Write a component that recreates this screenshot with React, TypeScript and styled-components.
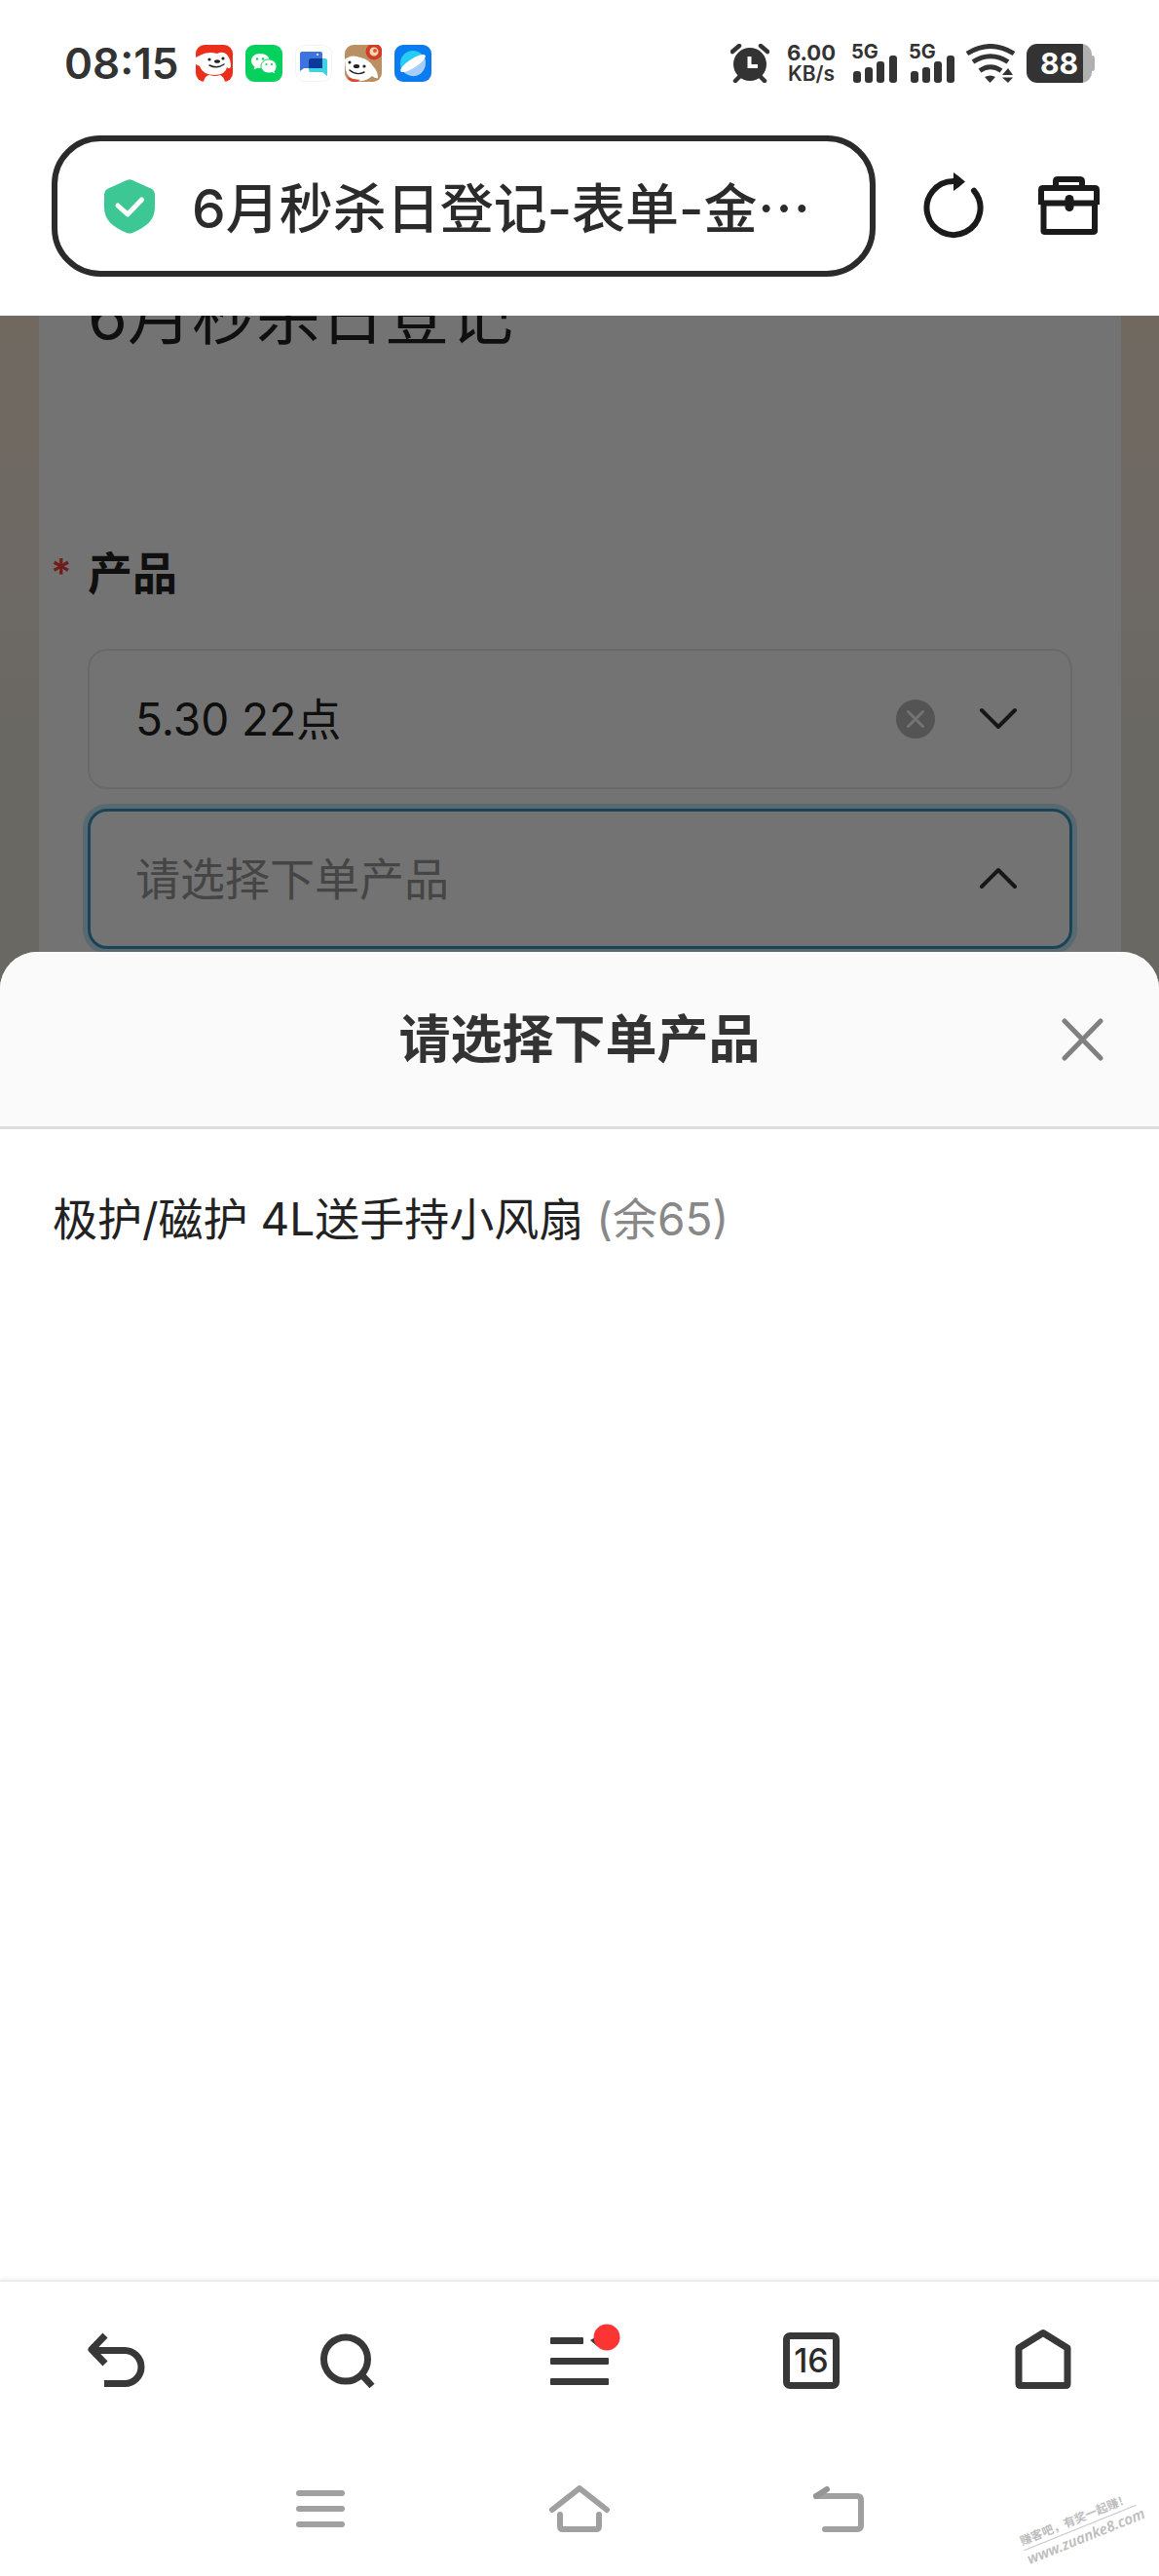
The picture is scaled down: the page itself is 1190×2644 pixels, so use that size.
import React from "react";
import styled, { createGlobalStyle, css } from "styled-components";

const GlobalStyle = createGlobalStyle`
  *, *::before, *::after { box-sizing: border-box; }
  body {
    margin: 0;
    background: #ffffff;
    color: #333333;
    font-family: Inter, "Noto Sans CJK SC", sans-serif;
  }
  button, select {
    font: inherit;
    color: inherit;
    background: none;
    border: 0;
    margin: 0;
    padding: 0;
  }
  svg { display: block; flex: none; }
`;

const Screen = styled.div`
  position: relative;
  display: flex;
  flex-direction: column;
  min-height: 100vh;
`;

/* ---------- status bar ---------- */

const StatusBar = styled.header`
  display: flex;
  align-items: center;
  justify-content: space-between;
  height: 129px;
  padding: 0 66px;
`;

const StatusGroup = styled.div<{ $gap: number }>`
  display: flex;
  align-items: center;
  gap: ${(p) => p.$gap}px;
`;

const Clock = styled.time`
  margin-right: 4px;
  font-size: 44px;
  font-weight: 600;
  line-height: 48px;
`;

const Speed = styled.div`
  display: flex;
  flex-direction: column;
  align-items: center;
  margin: 0 4px 0 6px;
  font-size: 22px;
  font-weight: 700;
  line-height: 22px;
`;

const SpeedUnit = styled.span`
  font-size: 21px;
  font-weight: 600;
`;

const Signal = styled.div`
  display: grid;
  width: 47px;
  height: 40px;
`;

const SignalLabel = styled.span`
  grid-area: 1 / 1;
  font-size: 20px;
  font-weight: 700;
  line-height: 16px;
`;

const SignalBars = styled.svg`
  grid-area: 1 / 1;
  align-self: end;
`;

const Battery = styled.div`
  display: flex;
  align-items: center;
`;

const BatteryBody = styled.div`
  display: flex;
  align-items: center;
  justify-content: center;
  width: 67px;
  height: 40px;
  border-radius: 11px;
  background: linear-gradient(90deg, #333333 58px, #b0b0b0 58px);
  color: #ffffff;
  font-size: 30px;
  font-weight: 700;
  line-height: 40px;
`;

const BatteryTip = styled.div`
  width: 3px;
  height: 16px;
  border-radius: 0 3px 3px 0;
  background: #b0b0b0;
`;

/* ---------- browser toolbar ---------- */

const Toolbar = styled.div`
  display: flex;
  align-items: center;
  padding: 10px 60px 40px 53px;
`;

const AddressBar = styled.button`
  display: flex;
  flex: 1;
  align-items: center;
  gap: 38px;
  min-width: 0;
  height: 145px;
  padding: 0 48px;
  border: 6px solid #2b2b2b;
  border-radius: 50px;
  color: #2b2b2b;
  font-size: 55px;
  font-weight: 500;
  line-height: 74px;
  white-space: nowrap;
`;

const Ellipsis = styled.span`
  font-family: "Noto Sans CJK SC", sans-serif;
`;

const ToolbarActions = styled.div`
  display: flex;
  gap: 56px;
  margin-left: 47px;
`;

/* ---------- page behind the sheet ---------- */

const Stage = styled.main`
  display: grid;
  flex: 1;
  grid-template-columns: minmax(0, 1fr);
  grid-template-rows: 653px 1fr;
`;

const FormPage = styled.div`
  grid-area: 1 / 1 / 3 / 2;
  padding: 0 39px 0 40px;
  background: linear-gradient(180deg, #fae8d6 0, #f3e9de 260px, #ece7dc 420px, #e8e6dc 653px);
`;

const FormCard = styled.form`
  height: 100%;
  padding: 0 50px;
  background: #ffffff;
`;

/* The page is scrolled, so only the lower part of the title stays in view. */
const TitleClip = styled.div`
  display: flex;
  align-items: flex-end;
  height: 46px;
  overflow: hidden;
`;

const FormTitle = styled.h1`
  margin: 0;
  color: #222222;
  font-size: 66px;
  font-weight: 400;
  line-height: 92px;
`;

const FieldLabel = styled.label`
  display: flex;
  align-items: center;
  margin: 187px 0 47px -38px;
  color: #222222;
  font-size: 46px;
  font-weight: 700;
  line-height: 62px;
`;

const Required = styled.span`
  width: 38px;
  color: #f5413a;
  font-size: 40px;
  font-weight: 600;
`;

const SelectStack = styled.div`
  display: flex;
  flex-direction: column;
  gap: 20px;
`;

const SelectBox = styled.div<{ $open?: boolean }>`
  display: flex;
  align-items: center;
  height: 144px;
  padding: 0 54px 0 47px;
  border: 2px solid #e8e8e8;
  border-radius: 20px;
  ${(p) =>
    p.$open &&
    css`
      padding: 0 53px 0 46px;
      border: 3px solid #3a96c0;
      box-shadow: 0 0 0 5px #c4e8f7;
    `}
`;

const Select = styled.select<{ $empty?: boolean }>`
  flex: 1;
  min-width: 0;
  height: 72px;
  appearance: none;
  outline: none;
  color: ${(p) => (p.$empty ? "#999999" : "#222222")};
  font-size: 46px;
  line-height: 64px;
`;

const ClearButton = styled.button`
  margin-right: 45px;
`;

const Backdrop = styled.div`
  z-index: 1;
  grid-area: 1 / 1 / 3 / 2;
  background: rgba(0, 0, 0, 0.55);
`;

/* ---------- bottom sheet ---------- */

const Sheet = styled.section`
  z-index: 2;
  grid-area: 2 / 1;
  border-radius: 38px 38px 0 0;
  background: #ffffff;
  overflow: hidden;
`;

const SheetHeader = styled.div`
  display: grid;
  grid-template-columns: 1fr auto 1fr;
  align-items: center;
  height: 182px;
  padding: 0 56px;
  border-bottom: 3px solid #dddddd;
  background: #fafafa;
`;

const SheetTitle = styled.h2`
  grid-column: 2;
  margin: 0;
  font-size: 53px;
  font-weight: 700;
  line-height: 72px;
`;

const CloseButton = styled.button`
  justify-self: end;
`;

const OptionList = styled.ul`
  margin: 0;
  padding: 50px 54px;
  list-style: none;
`;

const Option = styled.button`
  display: block;
  width: 100%;
  color: #222222;
  font-size: 46px;
  line-height: 84px;
  text-align: left;
`;

const Stock = styled.span`
  color: #888888;
`;

/* ---------- bottom bars ---------- */

const TabBar = styled.nav`
  z-index: 3;
  display: grid;
  grid-template-columns: repeat(5, 1fr);
  height: 168px;
  padding-bottom: 4px;
  border-top: 2px solid #ebebeb;
  background: #ffffff;
  box-shadow: 0 -3px 4px rgba(0, 0, 0, 0.03);
`;

const TabButton = styled.button`
  display: flex;
  align-items: center;
  justify-content: center;
`;

const TabCount = styled.span`
  display: flex;
  align-items: center;
  justify-content: center;
  width: 58px;
  height: 58px;
  border: 7px solid #383838;
  border-radius: 7px;
  color: #2b2b2b;
  font-size: 34px;
  font-weight: 500;
  line-height: 40px;
`;

const SystemNav = styled.nav`
  display: grid;
  grid-template-columns: repeat(3, 1fr);
  width: 67%;
  height: 136px;
  margin: 0 auto;
`;

const Watermark = styled.a`
  position: absolute;
  right: 19px;
  bottom: 31px;
  display: flex;
  flex-direction: column;
  width: 124px;
  color: #bdbdbd;
  font-size: 12px;
  font-weight: 700;
  line-height: 18px;
  text-decoration: none;
  white-space: nowrap;
  transform: rotate(-22deg);
`;

const WatermarkUrl = styled.span`
  border-top: 1px solid #c8c8c8;
  font-family: "Noto Sans", sans-serif;
  font-size: 15px;
  font-style: italic;
  font-weight: 600;
`;

/* ---------- drawings ---------- */

const MallDogIcon = () => (
  <svg width="38" height="38" viewBox="0 0 38 38" aria-hidden="true">
    <rect width="38" height="38" rx="9" fill="#ec2f1a" />
    <path d="M0 13 4 11Q12 6 22 9Q28 6 32 10Q36 15 36 22Q35 26 32 23Q31 30 20 31Q7 31 4 22L0 20Z" fill="#fff" />
    <path d="M8 38Q9 32 14 31Q20 33 25 31Q29 33 30 38Z" fill="#fff" />
    <circle cx="14" cy="15" r="1.6" fill="#222" />
    <circle cx="28" cy="14" r="1.6" fill="#222" />
    <ellipse cx="22" cy="17" rx="3" ry="1.8" fill="#222" />
    <path d="M14 21Q22 25 29 20" fill="none" stroke="#222" strokeWidth="1.4" strokeLinecap="round" />
  </svg>
);

const ChatBubblesIcon = () => (
  <svg width="38" height="38" viewBox="0 0 38 38" aria-hidden="true">
    <rect width="38" height="38" rx="9" fill="#06d15c" />
    <path d="M15 9C9.500 9 6 12.500 6 16.500C6 19 7.500 21 9.500 22.500L8.500 25.500L12.300 23.700Q14 24 16 24C21 24 25 21 25 16.500C25 12 20.500 9 15 9Z" fill="#fff" />
    <path d="M24 15C19 15 16 18.500 16 22C16 26 19.500 29 24 29Q26 29 27.500 28.500L30.500 30L30 27.300C31.500 26 32 24 32 22C32 18 28.500 15 24 15Z" fill="#fff" stroke="#06d15c" />
    <g fill="#06d15c">
      <circle cx="12" cy="14.500" r="1.200" />
      <circle cx="18" cy="14.500" r="1.200" />
      <circle cx="21.500" cy="20" r="1.100" />
      <circle cx="27" cy="20" r="1.100" />
    </g>
  </svg>
);

const MessagesIcon = () => (
  <svg width="38" height="38" viewBox="0 0 38 38" aria-hidden="true">
    <rect x=".5" y=".5" width="37" height="37" rx="9" fill="#fff" stroke="#f2f2f2" />
    <path d="M5 9Q5 7 7 7H26Q28 7 28 9V24H9L5 27Z" fill="#3f73e0" />
    <path d="M14 16Q14 14 16 14H31Q33 14 33 16V32L28 28H16Q14 28 14 26Z" fill="#3fd0e2" />
    <path d="M14 16Q14 14 16 14H28V24H14Z" fill="#0a3a9a" />
    <circle cx="23" cy="10" r="1" fill="#fff" />
  </svg>
);

const DonutDogIcon = () => (
  <svg width="38" height="38" viewBox="0 0 38 38" aria-hidden="true">
    <rect width="38" height="38" rx="9" fill="#ba9062" />
    <path d="M0 15Q7 9 16 13Q25 15 29 22Q34 27 34 34Q32 35 28 32Q22 38 13 37Q3 35 1 26Z" fill="#fff" />
    <path d="M3 33Q9 36 16 36L12 38H8Q4 37 3 33Z" fill="#e2442c" />
    <circle cx="30" cy="7" r="6.500" fill="#f6d9b0" stroke="#d23c26" strokeWidth="4" />
    <circle cx="31" cy="6" r="2" fill="#d9573c" />
    <circle cx="5" cy="18" r="1.500" fill="#222" />
    <circle cx="20" cy="22" r="1.600" fill="#222" />
    <ellipse cx="12" cy="22" rx="3.200" ry="2" fill="#222" />
    <path d="M5 26Q12 32 20 28" fill="none" stroke="#222" strokeWidth="1.400" strokeLinecap="round" />
  </svg>
);

const PlanetIcon = () => (
  <svg width="38" height="38" viewBox="0 0 38 38" aria-hidden="true">
    <rect width="38" height="38" rx="9" fill="#0a7cf0" />
    <circle cx="19" cy="19" r="13" fill="#25cdf6" />
    <path d="M7 24 31 13Q34 23 27 29.500Q19 35 11 29Q8 27 7 24Z" fill="#a9cdfa" />
    <ellipse cx="19" cy="19" rx="15" ry="4.500" transform="rotate(-33 19 19)" fill="#fff" />
  </svg>
);

const AlarmIcon = () => (
  <svg width="40" height="40" viewBox="0 0 40 40" fill="none" aria-label="闹钟">
    <path d="M2 8 9 2M38 8 31 2M5 38l5-5M35 38l-5-5" stroke="#333" strokeWidth="4.500" strokeLinecap="round" />
    <circle cx="20" cy="21" r="17" fill="#333" />
    <path d="M19.500 13V23H28" stroke="#fff" strokeWidth="4" />
  </svg>
);

const WifiIcon = () => (
  <svg width="50" height="40" viewBox="0 0 50 40" fill="none" aria-label="Wi-Fi">
    <g stroke="#333" strokeWidth="5">
      <path d="M1 10Q25-5 49 10" />
      <path d="M7 18.500Q25 7 43 18.500" />
      <path d="M14 27.500Q25 20 36 27.500" />
    </g>
    <path d="M19 34Q25 31 30 34L24.500 40ZM37 32 43 25 48 32ZM37 34.500H48L43 40Z" fill="#333" />
  </svg>
);

const SignalStrength = () => (
  <Signal>
    <SignalLabel>5G</SignalLabel>
    <SignalBars width="47" height="28" viewBox="0 0 47 28" fill="#333" aria-hidden="true">
      <rect x="2" y="16" width="8" height="12" rx="3" />
      <rect x="14" y="12" width="8" height="16" rx="3" />
      <rect x="26" y="6" width="8" height="22" rx="3" />
      <rect x="39" y="0" width="8" height="28" rx="3" />
    </SignalBars>
  </Signal>
);

const ShieldIcon = () => (
  <svg width="52" height="56" viewBox="0 0 52 56" aria-hidden="true">
    <path d="M23 1Q26-.5 29 1L49 10Q52 12 52 15V29C52 42 43 49 29 55Q26 56 23 55C9 49 0 42 0 29V15Q0 12 3 10Z" fill="#3cc795" />
    <path d="M14 27 24 36 38.500 21" fill="none" stroke="#fff" strokeWidth="5" strokeLinecap="round" strokeLinejoin="round" />
  </svg>
);

const RefreshIcon = () => (
  <svg width="64" height="70" viewBox="0 0 64 70" fill="none" aria-hidden="true">
    <path d="M33 9A27.500 27.500 0 1 0 54 18.700" stroke="#1a1a1a" strokeWidth="6" strokeLinecap="round" />
    <path d="M33 0Q39 4 45 9.500Q39 15 33 19Z" fill="#1a1a1a" />
  </svg>
);

const ToolboxIcon = () => (
  <svg width="64" height="70" viewBox="0 2 64 70" fill="none" stroke="#1a1a1a" strokeWidth="6" strokeLinejoin="round" aria-hidden="true">
    <path d="M18 18V11Q18 9 20 9H42Q45 9 45 11V18" />
    <path d="M3 35V20Q3 18 5 18H58Q60 18 60 20V35M3 33.500H60M5.500 34V62Q5.500 63 7 63H56Q58 63 58 62V34" />
    <path d="M32 29.500V37.500" strokeWidth="9" strokeLinecap="round" />
  </svg>
);

const ClearIcon = () => (
  <svg width="40" height="40" viewBox="0 0 40 40" aria-hidden="true">
    <circle cx="20" cy="20" r="20" fill="#bbbbbb" />
    <path d="M12.500 12.500 27.500 27.500M27.500 12.500 12.500 27.500" stroke="#fff" strokeWidth="3" strokeLinecap="round" />
  </svg>
);

const Chevron = ({ up = false }: { up?: boolean }) => (
  <svg width="40" height="24" viewBox="0 0 40 24" fill="none" aria-hidden="true">
    <path d={up ? "M3 20 20 3 37 20" : "M3 3 20 20 37 3"} stroke="#333" strokeWidth="4" strokeLinecap="round" strokeLinejoin="round" />
  </svg>
);

const CloseIcon = () => (
  <svg width="44" height="44" viewBox="0 0 44 44" aria-hidden="true">
    <path d="M3 3 40 41M40 3 3 41" stroke="#808080" strokeWidth="5" strokeLinecap="round" />
  </svg>
);

const BackIcon = () => (
  <svg width="60" height="60" viewBox="0 0 60 60" fill="none" stroke="#383838" strokeWidth="7" aria-hidden="true">
    <path d="M6 19.500H39A17 17 0 0 1 39 53.500H18" />
    <path d="M19 4 5 18.500 19 33" strokeLinejoin="round" />
  </svg>
);

const SearchIcon = () => (
  <svg width="60" height="60" viewBox="0 0 60 60" fill="none" stroke="#383838" strokeWidth="7" aria-hidden="true">
    <circle cx="28" cy="28.500" r="22.500" />
    <path d="M43 43 55 56" />
  </svg>
);

const MenuIcon = () => (
  <svg width="84" height="79" viewBox="0 0 84 79" aria-hidden="true">
    <g fill="#383838">
      <rect x="12" y="15" width="34" height="7" rx="1" />
      <path d="M53 18 60 14V24Z" />
      <rect x="12" y="36" width="60" height="7" rx="1" />
      <rect x="12" y="57" width="60" height="7" rx="1" />
    </g>
    <circle cx="70" cy="15" r="13.500" fill="#fd3434" />
  </svg>
);

const HomeIcon = () => (
  <svg width="60" height="66" viewBox="0 0 60 66" fill="none" stroke="#383838" strokeWidth="7" strokeLinejoin="round" aria-hidden="true">
    <path d="M30 4.500 55 20V56.500Q55 58.500 53 58.500H7Q5 58.500 5 56.500V20Z" />
  </svg>
);

const RecentsIcon = () => (
  <svg width="50" height="42" viewBox="0 0 50 42" stroke="#a0a0a0" strokeWidth="6" strokeLinecap="round" aria-hidden="true">
    <path d="M3 4H47M3 20H47M3 36H47" />
  </svg>
);

const SystemHomeIcon = () => (
  <svg width="64" height="50" viewBox="0 0 64 50" fill="none" stroke="#a0a0a0" strokeWidth="6" strokeLinecap="round" strokeLinejoin="round" aria-hidden="true">
    <path d="M4 25 32 3 60 25M12 30V42Q12 45 15 45H49Q52 45 52 42V30" />
  </svg>
);

const SystemBackIcon = () => (
  <svg width="54" height="50" viewBox="0 0 54 50" fill="none" stroke="#a0a0a0" strokeWidth="6" strokeLinecap="round" strokeLinejoin="round" aria-hidden="true">
    <path d="M4 11H46Q50 11 50 15V41Q50 45 46 45H13" />
    <path d="M4 11 15 4" stroke="#959595" />
  </svg>
);

export default function App() {
  return (
    <>
      <GlobalStyle />
      <Screen>
        <StatusBar>
          <StatusGroup $gap={13}>
            <Clock>08:15</Clock>
            <MallDogIcon />
            <ChatBubblesIcon />
            <MessagesIcon />
            <DonutDogIcon />
            <PlanetIcon />
          </StatusGroup>
          <StatusGroup $gap={12}>
            <AlarmIcon />
            <Speed>
              <span>6.00</span>
              <SpeedUnit>KB/s</SpeedUnit>
            </Speed>
            <SignalStrength />
            <SignalStrength />
            <WifiIcon />
            <Battery>
              <BatteryBody>88</BatteryBody>
              <BatteryTip />
            </Battery>
          </StatusGroup>
        </StatusBar>

        <Toolbar>
          <AddressBar type="button">
            <ShieldIcon />
            <span>
              6月秒杀日登记-表单-金<Ellipsis>…</Ellipsis>
            </span>
          </AddressBar>
          <ToolbarActions>
            <button type="button" aria-label="刷新">
              <RefreshIcon />
            </button>
            <button type="button" aria-label="工具箱">
              <ToolboxIcon />
            </button>
          </ToolbarActions>
        </Toolbar>

        <Stage>
          <FormPage>
            <FormCard>
              <TitleClip>
                <FormTitle>6月秒杀日登记</FormTitle>
              </TitleClip>
              <FieldLabel htmlFor="session">
                <Required>*</Required>
                产品
              </FieldLabel>
              <SelectStack>
                <SelectBox>
                  <Select id="session" defaultValue="5.30">
                    <option value="5.30">5.30 22点</option>
                  </Select>
                  <ClearButton type="button" aria-label="清除">
                    <ClearIcon />
                  </ClearButton>
                  <Chevron />
                </SelectBox>
                <SelectBox $open>
                  <Select $empty aria-label="下单产品" defaultValue="">
                    <option value="">请选择下单产品</option>
                  </Select>
                  <Chevron up />
                </SelectBox>
              </SelectStack>
            </FormCard>
          </FormPage>
          <Backdrop />
          <Sheet role="dialog" aria-labelledby="sheet-title">
            <SheetHeader>
              <SheetTitle id="sheet-title">请选择下单产品</SheetTitle>
              <CloseButton type="button" aria-label="关闭">
                <CloseIcon />
              </CloseButton>
            </SheetHeader>
            <OptionList>
              <li>
                <Option type="button">
                  极护/磁护 4L送手持小风扇 <Stock>(余65)</Stock>
                </Option>
              </li>
            </OptionList>
          </Sheet>
        </Stage>

        <TabBar>
          <TabButton type="button" aria-label="后退">
            <BackIcon />
          </TabButton>
          <TabButton type="button" aria-label="搜索">
            <SearchIcon />
          </TabButton>
          <TabButton type="button" aria-label="菜单">
            <MenuIcon />
          </TabButton>
          <TabButton type="button">
            <TabCount>16</TabCount>
          </TabButton>
          <TabButton type="button" aria-label="主页">
            <HomeIcon />
          </TabButton>
        </TabBar>

        <SystemNav>
          <TabButton type="button" aria-label="最近任务">
            <RecentsIcon />
          </TabButton>
          <TabButton type="button" aria-label="桌面">
            <SystemHomeIcon />
          </TabButton>
          <TabButton type="button" aria-label="返回">
            <SystemBackIcon />
          </TabButton>
        </SystemNav>

        <Watermark href="#">
          <span>赚客吧，有奖一起赚！</span>
          <WatermarkUrl>www.zuanke8.com</WatermarkUrl>
        </Watermark>
      </Screen>
    </>
  );
}
